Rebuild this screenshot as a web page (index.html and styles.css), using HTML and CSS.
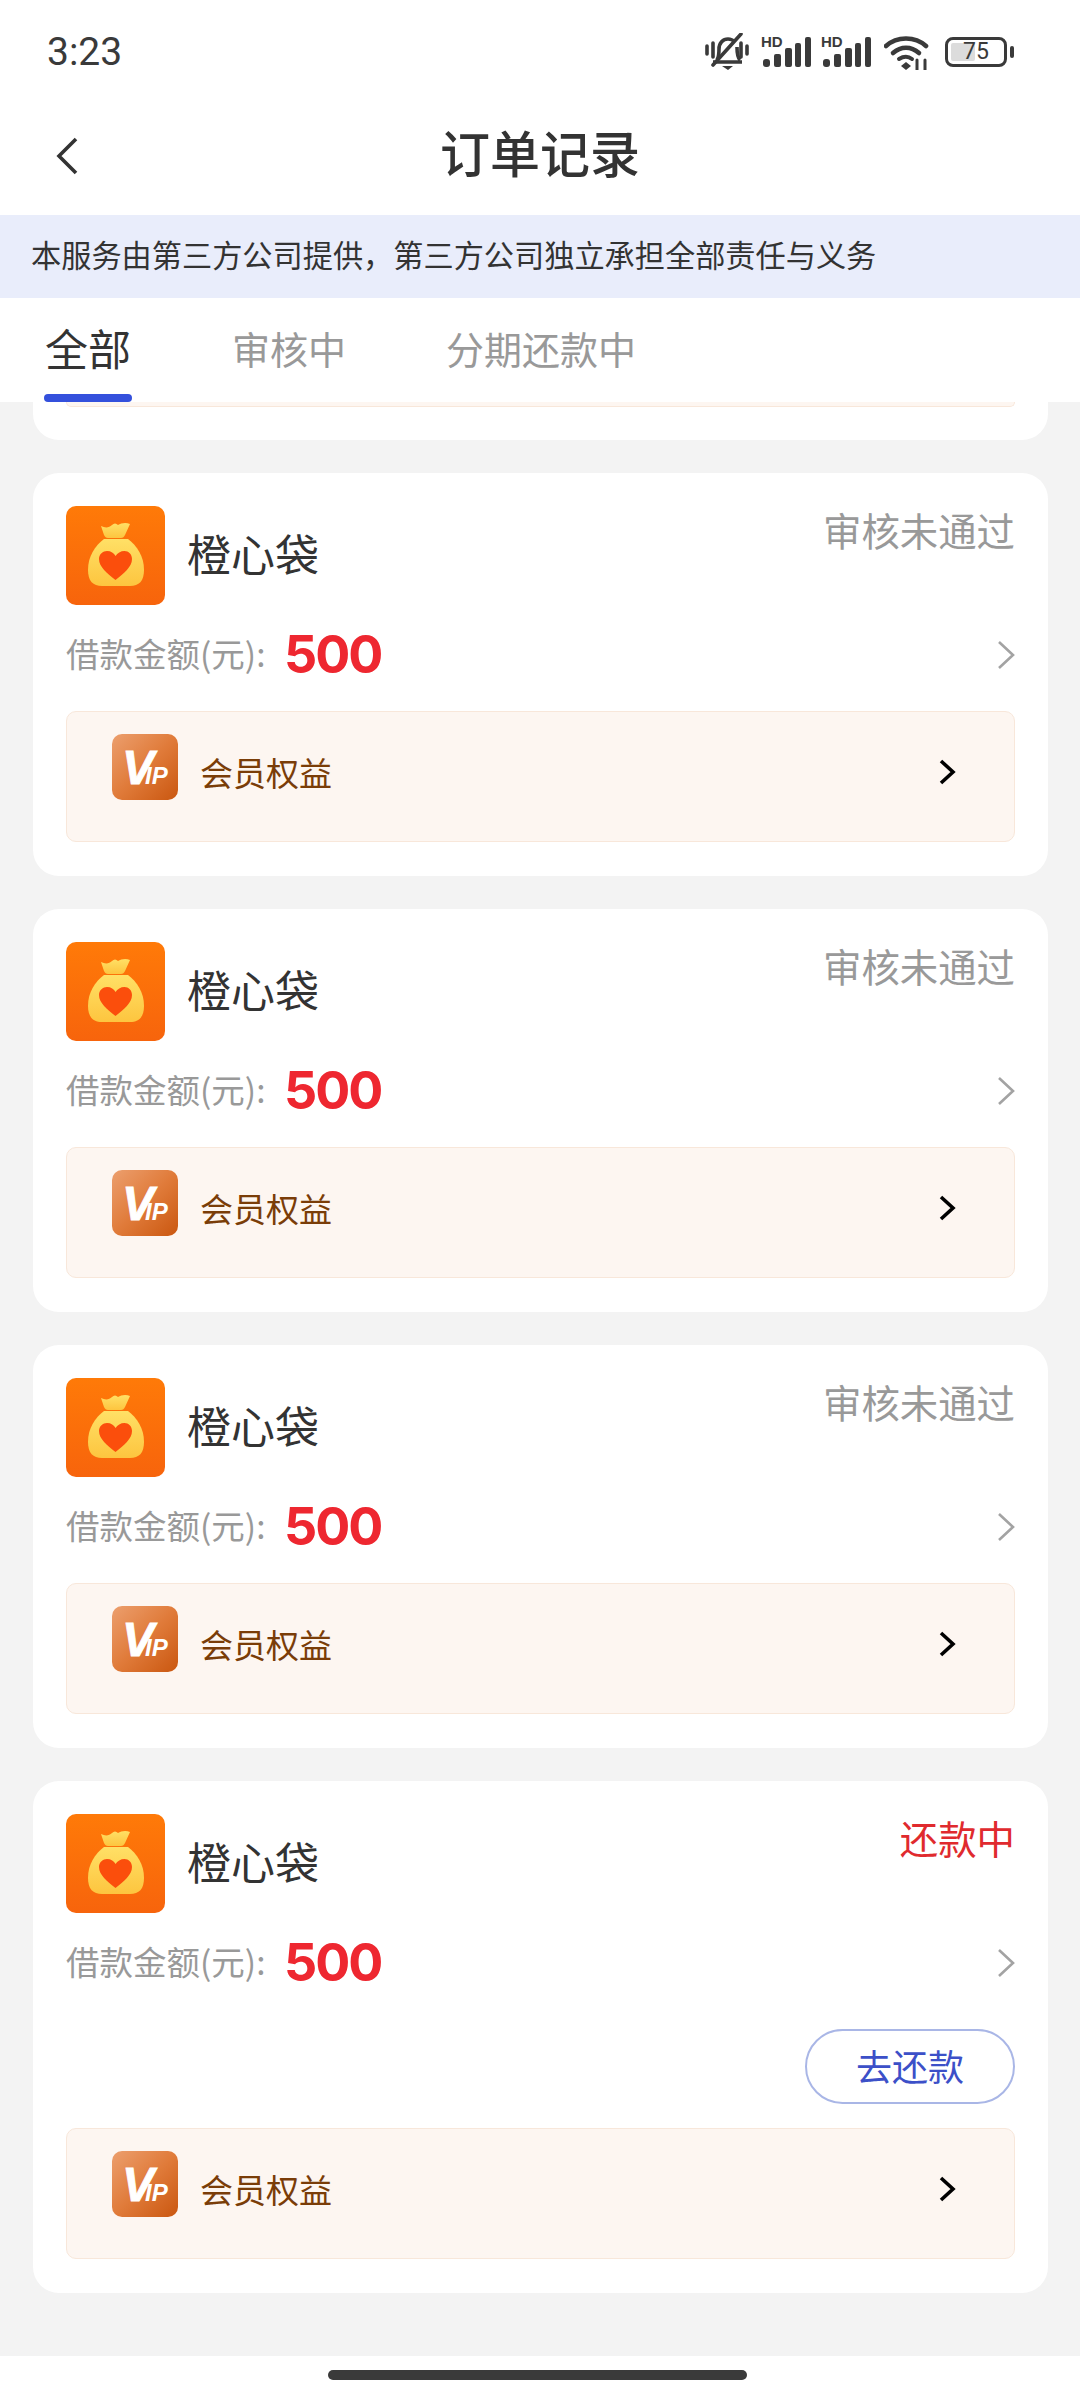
FILE: index.html
```html
<!DOCTYPE html>
<html lang="zh-CN">
<head>
  <meta charset="UTF-8" />
  <meta name="viewport" content="width=device-width, initial-scale=1.0"/>
  <title>订单记录</title>
  <link rel="stylesheet" href="styles.css">
</head>
<body>
  <!-- shared icons -->
  <svg class="defs" width="0" height="0">
    <defs>
      <linearGradient id="logoBg" x1="0" y1="0" x2="0" y2="1">
        <stop offset="0" stop-color="#ff7a08"/>
        <stop offset="1" stop-color="#f7640c"/>
      </linearGradient>
      <linearGradient id="bagFill" x1="0" y1="0" x2="0" y2="1">
        <stop offset="0" stop-color="#ffe066"/>
        <stop offset="1" stop-color="#fdc53f"/>
      </linearGradient>
      <linearGradient id="vipBg" x1="0" y1="0" x2="1" y2="1">
        <stop offset="0" stop-color="#ec9f6e"/>
        <stop offset="0.5" stop-color="#e07b3a"/>
        <stop offset="1" stop-color="#ca5710"/>
      </linearGradient>
      <symbol id="bagLogo" viewBox="0 0 99 99">
        <rect width="99" height="99" rx="10" fill="url(#logoBg)"/>
        <path d="M35 20c4 2 8 2 11-1 2-2 4-2 6 0 3-2 8-3 12-1l-5 11c-1 2-2 3-4 3H42c-2 0-3-1-4-3z" fill="url(#bagFill)"/>
        <path d="M38 33h24C71 40 78 50 78 64 78 75 73 80 64 80H36C27 80 22 75 22 64 22 50 29 40 38 33z" fill="url(#bagFill)"/>
        <path d="M49.5 74C41 67 33 61 33 53c0-5 4-8 8-8 4 0 7 2 8.5 5 2-3 5-5 9-5s7.5 3 7.5 8c0 8-8 14-16.500 21z" fill="#fb4e0c"/>
      </symbol>
      <symbol id="vipLogo" viewBox="0 0 66 66">
        <rect width="66" height="66" rx="10" fill="url(#vipBg)"/>
        <text class="vip-v" x="10" y="50">V</text>
        <text class="vip-ip" x="33" y="50">IP</text>
      </symbol>
      <symbol id="signal" viewBox="0 0 50 32">
        <text class="hd" x="0" y="11">HD</text>
        <rect x="2" y="23" width="7" height="8" rx="3" fill="#3a3a3a"/>
        <rect x="13" y="18" width="7" height="13" rx="2" fill="#3a3a3a"/>
        <rect x="24" y="12" width="7" height="19" rx="2" fill="#3a3a3a"/>
        <rect x="34" y="7" width="6" height="24" rx="2" fill="#3a3a3a"/>
        <rect x="44" y="1" width="6" height="30" rx="2" fill="#3a3a3a"/>
      </symbol>
    </defs>
  </svg>

  <div class="status-bar">
    <span class="clock">3:23</span>
    <div class="status-icons">
      <svg class="ic-bell" width="44" height="38" viewBox="0 0 44 38" fill="none" stroke="#3a3a3a" stroke-width="3.6">
        <path d="M12 27c2-3 2-7 2-11 0-6 4-10 9-10 3 0 5 1 7 3M32 14c0 5 0 10 3 13M8 29h29"/>
        <path d="M8 32 36 1" stroke-linecap="round"/>
        <path d="M17 33h11l-5 4z" fill="#3a3a3a" stroke="none"/>
        <path d="M2 13v8M8 10v14M36 10v14M42 13v8" stroke-linecap="round"/>
      </svg>
      <svg class="ic-signal" width="50" height="32"><use href="#signal"/></svg>
      <svg class="ic-signal" width="50" height="32"><use href="#signal"/></svg>
      <svg class="ic-wifi" width="46" height="36" viewBox="0 0 46 36" fill="none" stroke="#3a3a3a" stroke-width="4.6" stroke-linecap="round">
        <path d="M2 12C13 2 31 2 42 12"/>
        <path d="M9 19c8-7 18-7 26 0"/>
        <path d="M15 25c5-3 9-3 13 0" stroke-width="4"/>
        <path d="M22 28l-5 4 5 4 5-4z" fill="#3a3a3a" stroke="none"/>
        <path d="M33 26v10M41 26v10" stroke-width="3"/>
      </svg>
      <div class="battery">
        <div class="battery-body"><span class="battery-fill"></span><span class="battery-num">75</span></div>
        <span class="battery-nub"></span>
      </div>
    </div>
  </div>

  <div class="nav">
    <svg class="back" width="22" height="38" viewBox="0 0 22 38" fill="none" stroke="#333" stroke-width="3.6">
      <path d="M20 2 3 19l17 17"/>
    </svg>
    <div class="nav-title">订单记录</div>
  </div>

  <div class="notice">本服务由第三方公司提供，第三方公司独立承担全部责任与义务</div>

  <div class="tabs">
    <div class="tab active">全部</div>
    <div class="tab">审核中</div>
    <div class="tab">分期还款中</div>
  </div>

  <div class="list">
    <!-- tail of the previous order, scrolled under the tabs -->
    <div class="card-tail"><div class="tail-line"></div></div>

    <div class="card">
      <div class="head">
        <svg class="logo"><use href="#bagLogo"/></svg>
        <div class="name">橙心袋</div>
        <div class="state">审核未通过</div>
      </div>
      <div class="amount">
        <span class="amount-label">借款金额(元):</span>
        <span class="amount-num">500</span>
        <svg class="more" width="18" height="30" viewBox="0 0 18 30" fill="none" stroke="#a3a3a3" stroke-width="2.6"><path d="M2 2l14 13L2 28"/></svg>
      </div>
      <div class="vip">
        <svg class="vip-logo"><use href="#vipLogo"/></svg>
        <span class="vip-text">会员权益</span>
        <svg class="vip-more" width="17" height="26" viewBox="0 0 17 26" fill="none" stroke="#000" stroke-width="3.6"><path d="M2 2l12 11L2 24"/></svg>
      </div>
    </div>

    <div class="card">
      <div class="head">
        <svg class="logo"><use href="#bagLogo"/></svg>
        <div class="name">橙心袋</div>
        <div class="state">审核未通过</div>
      </div>
      <div class="amount">
        <span class="amount-label">借款金额(元):</span>
        <span class="amount-num">500</span>
        <svg class="more" width="18" height="30" viewBox="0 0 18 30" fill="none" stroke="#a3a3a3" stroke-width="2.6"><path d="M2 2l14 13L2 28"/></svg>
      </div>
      <div class="vip">
        <svg class="vip-logo"><use href="#vipLogo"/></svg>
        <span class="vip-text">会员权益</span>
        <svg class="vip-more" width="17" height="26" viewBox="0 0 17 26" fill="none" stroke="#000" stroke-width="3.6"><path d="M2 2l12 11L2 24"/></svg>
      </div>
    </div>

    <div class="card">
      <div class="head">
        <svg class="logo"><use href="#bagLogo"/></svg>
        <div class="name">橙心袋</div>
        <div class="state">审核未通过</div>
      </div>
      <div class="amount">
        <span class="amount-label">借款金额(元):</span>
        <span class="amount-num">500</span>
        <svg class="more" width="18" height="30" viewBox="0 0 18 30" fill="none" stroke="#a3a3a3" stroke-width="2.6"><path d="M2 2l14 13L2 28"/></svg>
      </div>
      <div class="vip">
        <svg class="vip-logo"><use href="#vipLogo"/></svg>
        <span class="vip-text">会员权益</span>
        <svg class="vip-more" width="17" height="26" viewBox="0 0 17 26" fill="none" stroke="#000" stroke-width="3.6"><path d="M2 2l12 11L2 24"/></svg>
      </div>
    </div>

    <div class="card">
      <div class="head">
        <svg class="logo"><use href="#bagLogo"/></svg>
        <div class="name">橙心袋</div>
        <div class="state state-red">还款中</div>
      </div>
      <div class="amount">
        <span class="amount-label">借款金额(元):</span>
        <span class="amount-num">500</span>
        <svg class="more" width="18" height="30" viewBox="0 0 18 30" fill="none" stroke="#a3a3a3" stroke-width="2.6"><path d="M2 2l14 13L2 28"/></svg>
      </div>
      <div class="actions">
        <div class="repay">去还款</div>
      </div>
      <div class="vip">
        <svg class="vip-logo"><use href="#vipLogo"/></svg>
        <span class="vip-text">会员权益</span>
        <svg class="vip-more" width="17" height="26" viewBox="0 0 17 26" fill="none" stroke="#000" stroke-width="3.6"><path d="M2 2l12 11L2 24"/></svg>
      </div>
    </div>
  </div>

  <div class="home-area"><div class="home-bar"></div></div>
</body>
</html>
```

FILE: styles.css
```css
* {
  box-sizing: border-box;
}

body {
  margin: 0;
  width: 1080px;
  height: 2400px;
  overflow: hidden;
  display: flex;
  flex-direction: column;
  background: #ffffff;
  color: #333333;
  font-family: "Noto Sans CJK SC", "Noto Sans", sans-serif;
}

.defs {
  display: block;
  height: 0;
}

/* status bar */
.status-bar {
  height: 104px;
  flex-shrink: 0;
  display: flex;
  align-items: center;
  justify-content: space-between;
  padding: 0 66px 0 47px;
}

.clock {
  font-family: Roboto, sans-serif;
  font-size: 39px;
  color: #3a3a3a;
}

.status-icons {
  display: flex;
  align-items: center;
}

.ic-bell {
  margin-right: 12px;
}

.ic-signal {
  margin-right: 10px;
}

.ic-wifi {
  margin-left: 3px;
  margin-right: 15px;
}

.hd {
  font-family: "Liberation Sans", sans-serif;
  font-size: 15px;
  font-weight: 700;
  fill: #3a3a3a;
}

.battery {
  display: flex;
  align-items: center;
}

.battery-body {
  position: relative;
  width: 62px;
  height: 30px;
  border: 3px solid #3a3a3a;
  border-radius: 8px;
  display: flex;
  align-items: center;
  justify-content: center;
}

.battery-fill {
  position: absolute;
  left: 3px;
  top: 3px;
  bottom: 3px;
  width: 24px;
  background: #dcdcdc;
  border-radius: 2px;
}

.battery-num {
  position: relative;
  font-family: Roboto, sans-serif;
  font-size: 23px;
  line-height: 24px;
  color: #3a3a3a;
}

.battery-nub {
  width: 4px;
  height: 12px;
  margin-left: 3px;
  background: #3a3a3a;
  border-radius: 2px;
}

/* title row */
.nav {
  height: 111px;
  flex-shrink: 0;
  position: relative;
  padding-bottom: 18px;
  display: flex;
  align-items: center;
  justify-content: center;
}

.back {
  position: absolute;
  left: 56px;
  top: 33px;
}

.nav-title {
  font-size: 50px;
  font-weight: 500;
  line-height: 60px;
}

.notice {
  height: 83px;
  flex-shrink: 0;
  padding-left: 31px;
  background: #e9edfb;
  font-size: 30.2px;
  line-height: 78px;
  white-space: nowrap;
}

/* tabs */
.tabs {
  height: 104px;
  flex-shrink: 0;
  display: flex;
  gap: 100px;
  padding-left: 44px;
  background: #ffffff;
  position: relative;
  z-index: 1;
}

.tab {
  position: relative;
  min-width: 88px;
  padding-top: 20px;
  text-align: center;
  font-size: 38px;
  line-height: 60px;
  color: #999999;
}

.tab.active {
  padding-top: 19px;
  font-size: 43px;
  color: #333333;
}

.tab.active::after {
  content: "";
  position: absolute;
  left: 0;
  right: 0;
  bottom: 0;
  height: 8px;
  background: #3450dc;
  border-radius: 4px;
}

/* order list */
.list {
  height: 1954px;
  flex-shrink: 0;
  display: flex;
  flex-direction: column;
  gap: 33px;
  padding: 0 32px 0 33px;
  background: #f3f3f3;
  overflow: hidden;
}

.card-tail {
  height: 38px;
  flex-shrink: 0;
  padding: 0 33px;
  background: #ffffff;
  border-radius: 0 0 26px 26px;
}

.tail-line {
  height: 5px;
  background: #fdf6f1;
  border: 1px solid #f8e7da;
  border-top: none;
  border-radius: 0 0 10px 10px;
}

.card {
  flex-shrink: 0;
  padding: 33px 33px 34px;
  background: #ffffff;
  border-radius: 26px;
}

.head {
  display: flex;
  align-items: flex-start;
}

.logo {
  width: 99px;
  height: 99px;
  flex-shrink: 0;
}

.name {
  align-self: center;
  margin-left: 22px;
  margin-bottom: 6px;
  font-size: 44px;
  line-height: 60px;
}

.state {
  margin-left: auto;
  font-size: 38.4px;
  line-height: 46px;
  color: #999999;
}

.state-red {
  color: #e02a2e;
}

.amount {
  display: flex;
  align-items: center;
  height: 60px;
  margin-top: 18px;
}

.amount-label {
  width: 218px;
  margin-bottom: 2px;
  font-size: 33.5px;
  color: #999999;
  white-space: nowrap;
}

.amount-num {
  margin-top: 3px;
  font-family: Inter, "Liberation Sans", sans-serif;
  font-size: 52px;
  font-weight: 700;
  letter-spacing: -2px;
  color: #ee2730;
}

.more {
  margin-left: auto;
  margin-top: 3px;
}

.actions {
  display: flex;
  justify-content: flex-end;
  margin-top: 38px;
}

.repay {
  width: 210px;
  height: 75px;
  border: 2px solid #a9b6e6;
  border-radius: 38px;
  text-align: center;
  font-size: 36px;
  line-height: 69px;
  color: #3c50c8;
}

.vip {
  display: flex;
  align-items: center;
  height: 131px;
  margin-top: 28px;
  padding-left: 45px;
  background: #fdf6f1;
  border: 1px solid #f8e7da;
  border-radius: 10px;
}

.actions + .vip {
  margin-top: 24px;
}

.vip-logo {
  width: 66px;
  height: 66px;
  margin-bottom: 20px;
  flex-shrink: 0;
}

.vip-v {
  font-family: "Liberation Sans", sans-serif;
  font-size: 48px;
  font-weight: 700;
  font-style: italic;
  fill: #ffffff;
  stroke: #ffffff;
  stroke-width: 0.8px;
}

.vip-ip {
  font-family: "Liberation Sans", sans-serif;
  font-size: 24px;
  font-weight: 700;
  font-style: italic;
  fill: #ffffff;
}

.vip-text {
  margin-left: 22px;
  margin-bottom: 10px;
  font-size: 33px;
  color: #7a3d08;
}

.vip-more {
  margin-left: auto;
  margin-right: 58px;
  margin-bottom: 10px;
}

.home-area {
  flex: 1;
  display: flex;
  justify-content: center;
  padding-top: 14px;
  padding-right: 6px;
}

.home-bar {
  width: 419px;
  height: 10px;
  background: #3a3a3a;
  border-radius: 5px;
}
```
